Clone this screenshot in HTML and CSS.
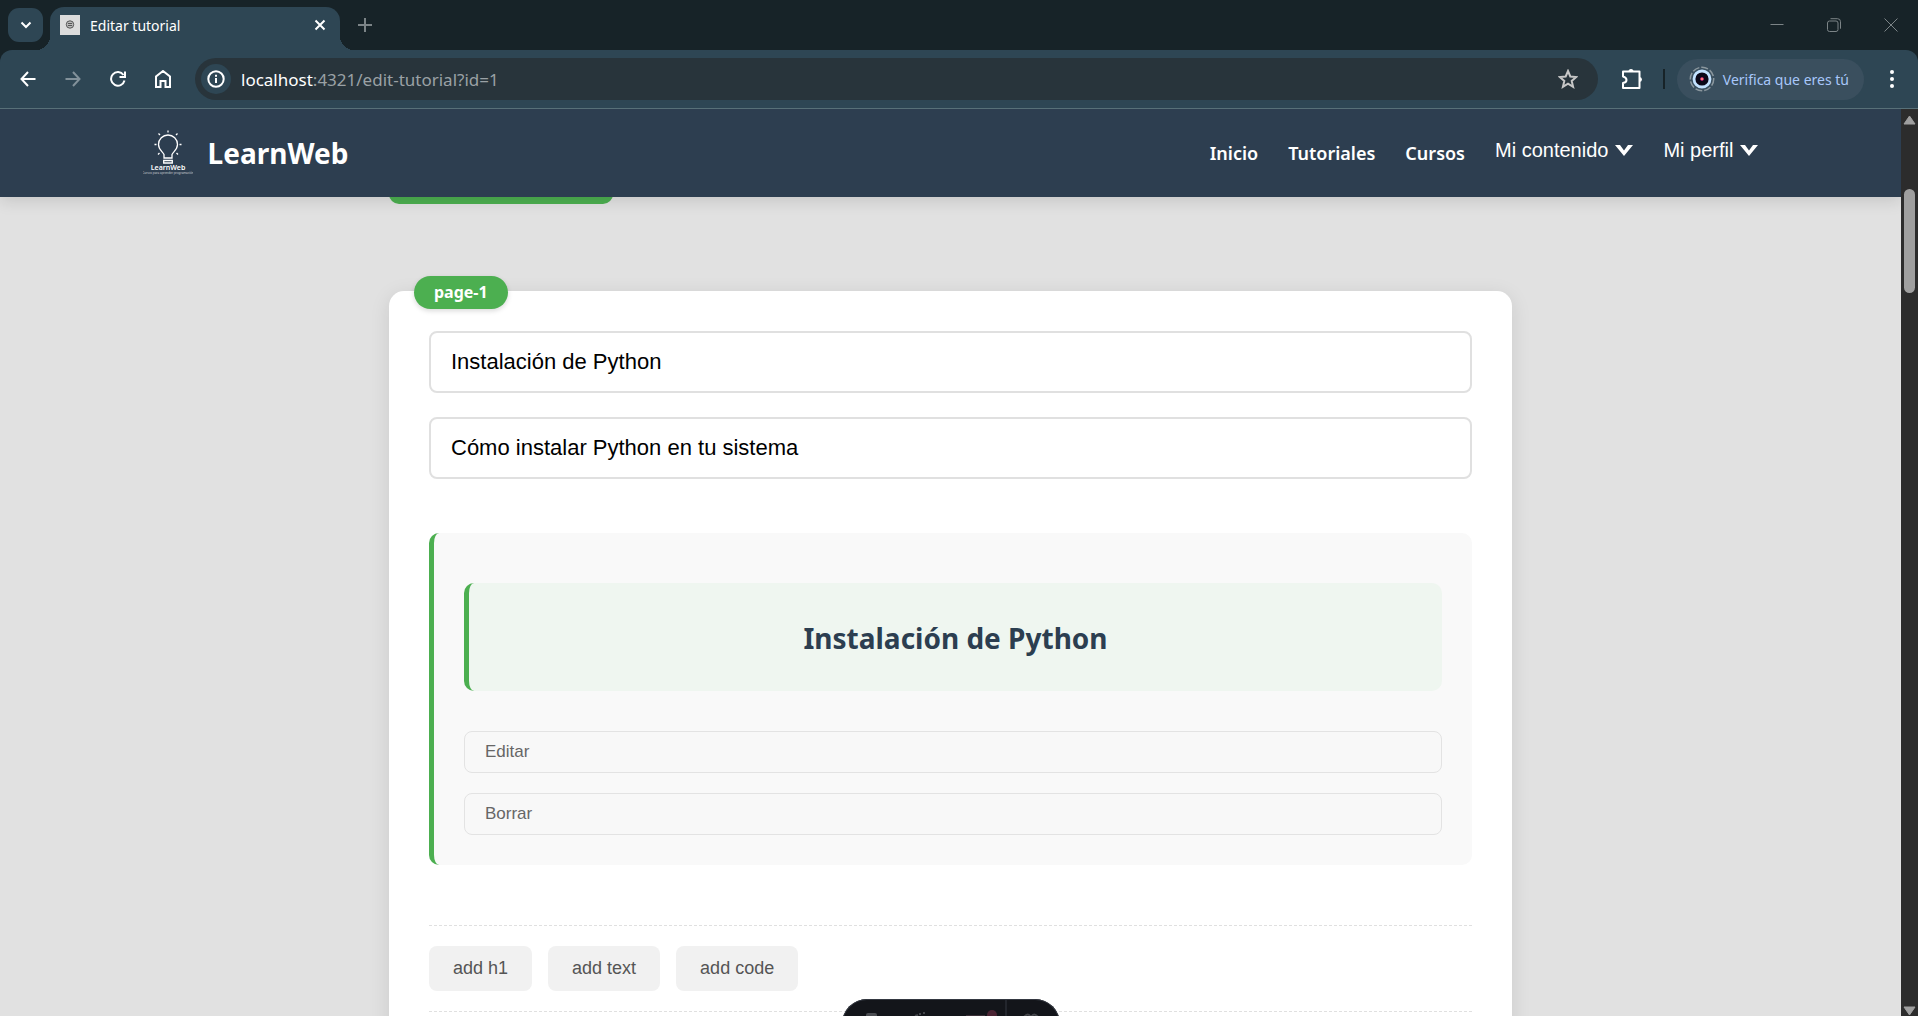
FILE: index.html
```html
<!DOCTYPE html>
<html lang="es">
<head>
<meta charset="utf-8">
<title>Editar tutorial</title>
<link rel="stylesheet" href="styles.css">
</head>
<body>
<div class="tabstrip">
  <button class="tab-search" aria-label="Buscar pestañas"><svg width="16" height="16" viewBox="0 0 16 16" class="line bold"><path d="M3.500 5.500 8 10l4.500-4.500"/></svg></button>
  <div class="tab">
    <svg width="20" height="20" viewBox="0 0 20 20"><path fill="#dcdcdc" d="M0 0h20v20H0z"/><circle cx="10" cy="9.500" r="3.700" fill="#bbb" stroke="#555" stroke-width="1"/><path d="M8 8.500h4M8 10.500h4" stroke="#555"/></svg>
    <span class="tab-title">Editar tutorial</span>
    <button class="plain" aria-label="Cerrar pestaña"><svg width="12" height="12" viewBox="0 0 12 12" class="line bold"><path d="m1.500 1.500 9 9m0-9-9 9"/></svg></button>
  </div>
  <button class="plain new-tab" aria-label="Nueva pestaña"><svg width="14" height="14" viewBox="0 0 14 14" class="line bold"><path d="M7 0v14M0 7h14"/></svg></button>
  <div class="window-controls">
    <button class="plain" aria-label="Minimizar"><svg width="14" height="14" viewBox="0 0 14 14" class="line"><path d="M.500 6.500h13"/></svg></button>
    <button class="plain" aria-label="Restaurar"><svg width="14" height="14" viewBox="0 0 14 14" class="line"><rect x=".5" y="3" width="10.500" height="10.500" rx="2"/><path d="M3.500.700h7a3 3 0 0 1 3 3v7"/></svg></button>
    <button class="plain" aria-label="Cerrar"><svg width="14" height="14" viewBox="0 0 14 14" class="line"><path d="m.500.500 13 13m0-13-13 13"/></svg></button>
  </div>
</div>
<div class="toolbar">
  <div class="nav-buttons">
    <button class="plain" aria-label="Atrás"><svg width="16" height="16" viewBox="0 0 16 16" class="line bold"><path d="M15.500 8H1.500M8 1 1.500 8 8 15"/></svg></button>
    <button class="plain dim" aria-label="Adelante"><svg width="16" height="16" viewBox="0 0 16 16" class="line bold"><path d="M.500 8h14M8 1l6.500 7L8 15"/></svg></button>
    <button class="plain" aria-label="Recargar"><svg width="16" height="16" viewBox="0 0 16 16" class="line bold"><path d="M14.500 9.500A6.800 6.800 0 1 1 13.500 4M15 .500V6H9.500"/></svg></button>
    <button class="plain" aria-label="Inicio del navegador"><svg width="16" height="18" viewBox="0 0 16 18" class="line bold"><path d="M1 17V6.500L8 1l7 5.500V17h-4.500v-6h-5v6z"/></svg></button>
  </div>
  <div class="omnibox">
    <span class="site-info"><svg width="18" height="18" viewBox="0 0 18 18" class="line bold"><circle cx="9" cy="9" r="7.700"/><path d="M9 8v5M9 4.700v2"/></svg></span>
    <span class="url"><b>localhost</b>:4321/edit-tutorial?id=1</span>
    <svg width="20" height="20" viewBox="0 0 20 20" class="line star"><path d="m10 2 2.300 5.500 6 .500-4.600 3.900 1.400 5.900L10 14.700l-5.100 3.100 1.400-5.900L1.700 8l6-.500z"/></svg>
  </div>
  <button class="plain extensions" aria-label="Extensiones"><svg width="22" height="22" viewBox="0 0 22 22" class="line bold"><path d="M2 3.500h16.500v16.500H2v-5q3.500-.500 3.500-3T2 8.500z" stroke-linejoin="round"/><path d="M7.500 3.500a2.500 2.500 0 0 1 5 0zM18.500 9a2.500 2.500 0 0 1 0 5z" fill="#fff" stroke="none"/></svg></button>
  <span class="separator"></span>
  <button class="profile"><svg width="26" height="26" viewBox="0 0 26 26"><circle cx="13" cy="13" r="11.700" fill="none" stroke="#8b979e" stroke-width="1.500" stroke-dasharray="7 2"/><circle cx="13" cy="13" r="8" fill="#0b0818" stroke="#c3e2ff" stroke-width="2.800"/><circle cx="13" cy="13" r="1.800" fill="#ff2f92"/><circle cx="13" cy="13" r=".8" fill="#ffe14d"/></svg>Verifica que eres tú</button>
  <button class="plain more" aria-label="Más"><svg width="6" height="20" viewBox="0 0 6 20" fill="#fff"><circle cx="3" cy="3" r="2"/><circle cx="3" cy="10" r="2"/><circle cx="3" cy="17" r="2"/></svg></button>
</div>
<div class="viewport">
  <div class="page">
    <header class="site-header">
      <div class="header-inner">
        <a class="brand" href="#">
          <svg width="50" height="50" viewBox="0 0 50 50" fill="none" stroke="#fff" stroke-width="1.300"><path d="M21 30v-3.500c-1.500-3-5.500-5-5.500-10a9.500 9.500 0 0 1 19 0c0 5-4 7-5.500 10V30zM20.700 32.500h8.600V35h-8.600zM25 2.500v2M15.500 5.500l1.500 1.500M34.500 5.500 33 7M11.500 16.500h2M36.500 16.500h2M15 26.500l1.500-1.500M35 26.500 33.500 25"/><text x="25" y="42" class="logo-name">LearnWeb</text><text x="25" y="46" class="logo-motto">Cursos para aprender programación</text></svg>
          <span>LearnWeb</span>
        </a>
        <nav class="menu">
          <a href="#">Inicio</a>
          <a href="#">Tutoriales</a>
          <a href="#">Cursos</a>
          <button class="plain dropdown">Mi contenido <svg width="18" height="12" viewBox="0 0 18 12"><path d="M0 1h5l4 5.500L13 1h5L9 12z" fill="#fff"/></svg></button>
          <button class="plain dropdown">Mi perfil <svg width="18" height="12" viewBox="0 0 18 12"><path d="M0 1h5l4 5.500L13 1h5L9 12z" fill="#fff"/></svg></button>
        </nav>
      </div>
    </header>
    <main class="editor">
      <button class="action" aria-label="Añadir página"></button>
      <section class="card">
        <span class="badge">page-1</span>
        <input class="field" type="text" aria-label="Título" value="Instalación de Python">
        <input class="field" type="text" aria-label="Descripción" value="Cómo instalar Python en tu sistema">
        <div class="block">
          <h1 class="block-title">Instalación de Python</h1>
          <button class="block-action">Editar</button>
          <button class="block-action">Borrar</button>
        </div>
        <div class="add-row">
          <button>add h1</button>
          <button>add text</button>
          <button>add code</button>
        </div>
        <div class="add-row"></div>
      </section>
    </main>
    <div class="dev-bar"><svg width="218" height="50" viewBox="0 0 218 50"><rect x="24" y="14" width="11" height="12" rx="2" fill="#4b4d52"/><path d="M73 17l3-1M77 15h2M81 14h2" stroke="#44464b" stroke-width="2"/><path d="M124 17h19" stroke="#3b3038" stroke-width="2"/><circle cx="150" cy="16" r="5" fill="#4a2433"/><path d="M164 1v49" stroke="#343841"/><path d="M182 18q4-5 7 0 3-5 7 0" stroke="#44464b" stroke-width="2" fill="none"/></svg></div>
  </div>
  <div class="scrollbar"><svg width="13" height="10" viewBox="0 0 13 10"><path d="M6.500 1 12 9H1z" class="arrow"/></svg><span class="thumb"></span><svg class="down" width="13" height="10" viewBox="0 0 13 10"><path d="M6.500 9 12 1H1z" class="arrow"/></svg></div>
</div>
</body>
</html>
```
FILE: styles.css
```css
* { box-sizing: border-box; }
body {
  margin: 0;
  height: 100vh;
  display: flex;
  flex-direction: column;
  overflow: hidden;
  background: #172328;
  font-family: "Noto Sans", sans-serif;
  color: #fff;
}
svg { display: block; flex: none; }
button { font: inherit; color: inherit; border: 0; }
a { color: inherit; text-decoration: none; }
.plain { background: none; padding: 0; }
.line { fill: none; stroke: currentColor; stroke-width: 1; }
.line.bold { stroke-width: 2; }

/* Browser tabs */
.tabstrip { display: flex; height: 50px; flex: none; padding-left: 8px; }
.tab-search {
  display: grid;
  place-items: center;
  width: 35px;
  height: 34px;
  margin-top: 8px;
  padding: 0;
  border-radius: 11px;
  background: #2e4654;
}
.tab {
  position: relative;
  display: flex;
  align-items: center;
  width: 290px;
  margin: 7px 0 0 7px;
  padding: 0 14px 7px 10px;
  border-radius: 14px 14px 0 0;
  background: #2e4654;
}
.tab::before, .tab::after {
  content: "";
  position: absolute;
  bottom: 0;
  width: 14px;
  height: 14px;
}
.tab::before { left: -14px; background: radial-gradient(circle at 0 0, transparent 14px, #2e4654 14px); }
.tab::after { right: -14px; background: radial-gradient(circle at 100% 0, transparent 14px, #2e4654 14px); }
.tab-title { flex: 1; padding-left: 10px; font-size: 14px; }
.new-tab { margin-left: 18px; color: #7c8487; }
.window-controls { display: flex; gap: 43px; margin-left: auto; padding-right: 20px; color: #7c8487; }

/* Address bar */
.toolbar {
  display: flex;
  align-items: center;
  flex: none;
  height: 59px;
  padding: 0 23px 0 20px;
  border-bottom: 1px solid #587078;
  border-radius: 12px 12px 0 0;
  background: #2e4654;
}
.nav-buttons { display: flex; align-items: center; gap: 29px; width: 175px; }
.dim { color: #82919a; }
.omnibox {
  display: flex;
  align-items: center;
  flex: 1;
  height: 42px;
  padding: 0 20px 0 6px;
  border-radius: 21px;
  background: #28343b;
}
.site-info {
  display: grid;
  place-items: center;
  width: 30px;
  height: 30px;
  border-radius: 15px;
  background: #2e4654;
}
.url { flex: 1; padding-left: 10px; font-size: 17px; color: #9aa1a5; }
.url b { font-weight: 400; color: #fff; }
.star { color: #c7c7c7; stroke-width: 2; }
.extensions { margin-left: 23px; }
.separator { width: 2px; height: 20px; margin: 0 12px 0 20px; background: #172328; }
.profile {
  display: flex;
  align-items: center;
  gap: 8px;
  height: 41px;
  padding: 0 15px 0 12px;
  border-radius: 21px;
  background: #3a4f5e;
  color: #a8c7fa;
  font-size: 14px;
}
.more { margin-left: 25px; }

/* Page */
.viewport { display: flex; flex: 1; min-height: 0; }
.page { position: relative; flex: 1; overflow: hidden; background: #e1e1e1; }
.site-header {
  position: relative;
  z-index: 2;
  background: #2d3e50;
  box-shadow: 0 4px 15px rgba(0, 0, 0, .12);
}
.header-inner {
  display: flex;
  align-items: center;
  justify-content: space-between;
  width: 85%;
  height: 88px;
  margin: 0 auto;
}
.brand { display: flex; align-items: center; gap: 15px; font-size: 28px; font-weight: 700; }
.logo-name, .logo-motto { fill: #fff; stroke: none; text-anchor: middle; font-weight: 600; }
.logo-name { font-size: 7px; }
.logo-motto { font-size: 3px; font-weight: 400; opacity: .7; }
.menu { display: flex; gap: 30px; align-items: center; font-size: 18px; line-height: 28px; font-weight: 600; }
.dropdown {
  display: flex;
  align-items: center;
  align-self: flex-start;
  gap: 7px;
  font: 20px/22px "Liberation Sans", sans-serif;
}
.editor { width: 1123px; max-width: 90%; margin: -43px auto 0; }
.action {
  display: block;
  width: 224px;
  height: 50px;
  border-radius: 10px;
  background: #4caf50;
}
.card {
  position: relative;
  display: flex;
  flex-direction: column;
  margin-top: 87px;
  padding: 40px;
  border-radius: 15px;
  background: #fff;
  box-shadow: 0 4px 20px rgba(0, 0, 0, .1);
}
.badge {
  position: absolute;
  top: -15px;
  left: 25px;
  padding: 6px 20px;
  border-radius: 17px;
  background: #4caf50;
  box-shadow: 0 2px 5px rgba(0, 0, 0, .15);
  font-size: 16px;
  line-height: 21px;
  font-weight: 700;
}
.field {
  width: 100%;
  height: 62px;
  margin-bottom: 24px;
  padding: 0 20px;
  border: 2px solid #e0e0e0;
  border-radius: 8px;
  background: #fff;
  color: #000;
  font: 22px "Liberation Sans", sans-serif;
}
.block {
  display: flex;
  flex-direction: column;
  gap: 20px;
  margin-top: 30px;
  padding: 50px 30px 30px;
  border-left: 5px solid #4caf50;
  border-radius: 10px;
  background: #f9f9f9;
}
.block-title {
  margin: 0 0 20px;
  padding: 33px 20px 31px;
  border-left: 5px solid #4caf50;
  border-radius: 10px;
  background: #eff6f0;
  color: #2c3e50;
  font-size: 28px;
  line-height: 44px;
  text-align: center;
}
.block-action {
  height: 42px;
  padding: 0 20px;
  border: 1px solid #e3e3e3;
  border-radius: 8px;
  background: #f8f8f8;
  color: #666;
  font: 17px "Liberation Sans", sans-serif;
  text-align: left;
}
.add-row {
  display: flex;
  gap: 16px;
  padding: 20px 0;
  border-top: 1px dashed #e0e0e0;
}
.block + .add-row { margin-top: 60px; }
.add-row button {
  height: 45px;
  padding: 0 24px;
  border-radius: 8px;
  background: #f1f1f1;
  color: #555;
  font: 18px "Liberation Sans", sans-serif;
}
.dev-bar {
  position: absolute;
  left: 50%;
  bottom: -33px;
  transform: translateX(-50%);
  overflow: hidden;
  border-radius: 26px;
  background: #13151a;
  box-shadow: inset 0 0 0 1px #343841;
}
.scrollbar {
  display: flex;
  flex-direction: column;
  align-items: center;
  width: 17px;
  padding-top: 6px;
  background: #2c2c2c;
}
.arrow { fill: #9f9f9f; stroke: #9f9f9f; stroke-linejoin: round; }
.thumb { width: 11px; height: 104px; margin-top: 64px; border-radius: 6px; background: #9f9f9f; }
.down { margin-top: auto; }
```
